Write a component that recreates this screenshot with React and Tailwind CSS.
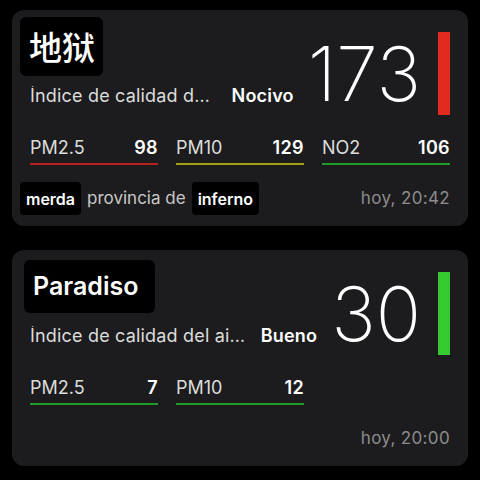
import React from "react";

const cards = [
    {
        title: "地狱",
        cjk: true,
        category: "Nocivo",
        subtitle: "Índice de calidad del aire",
        aqi: 173,
        bar: "bg-[#e12b1f]",
        pollutants: [
            { label: "PM2.5", value: 98, line: "border-[#b3221d]" },
            { label: "PM10", value: 129, line: "border-[#a39f12]" },
            { label: "NO2", value: 106, line: "border-[#1f9a26]" },
        ],
        tags: true,
        time: "hoy, 20:42",
    },
    {
        title: "Paradiso",
        cjk: false,
        category: "Bueno",
        subtitle: "Índice de calidad del aire",
        aqi: 30,
        bar: "bg-[#35cb30]",
        pollutants: [
            { label: "PM2.5", value: 7, line: "border-[#1f9a26]" },
            { label: "PM10", value: 12, line: "border-[#1f9a26]" },
        ],
        tags: false,
        time: "hoy, 20:00",
    },
];

function Tag({ children }) {
    return (
        <span className="bg-black rounded-[4px] h-[33px] px-[6px] flex items-center text-[16px] font-semibold text-white">
            {children}
        </span>
    );
}

function Card({ data, first }) {
    return (
        <div className={`w-[456px] h-[216px] ml-3 ${first ? "mt-[10px]" : "mt-6"} rounded-xl bg-[#1c1c1e] flex flex-col pt-[7px] px-[18px] pb-[11px]`}>

            {/* TOP */}
            <div className="flex items-start">

                <div className="flex-1 min-w-0 flex flex-col">
                    <div className={`h-[59px] flex items-center ${data.cjk ? "-ml-[10px]" : "-ml-[6px]"}`}>
                        {data.cjk ? (
                            <span className="bg-black rounded-md h-[59px] pl-[9px] pr-[8px] flex items-center text-[33px] font-medium text-white font-['Noto_Sans_CJK_SC',sans-serif]">
                                {data.title}
                            </span>
                        ) : (
                            <span className="bg-black rounded-md h-[53px] pl-[9px] pr-[17px] flex items-center text-[25px] font-semibold text-white">
                                {data.title}
                            </span>
                        )}
                    </div>
                    <div className="mt-[10px] flex items-baseline leading-[20px] text-[18px] tracking-[0.01em]">
                        <span className="truncate text-[#dcdcdc]">{data.subtitle}</span>
                        <span className="shrink-0 ml-[15px] font-semibold text-white">{data.category}</span>
                    </div>
                </div>

                <div className="ml-[14px] mt-[19px] text-[75px] font-extralight leading-none text-white">
                    {data.aqi}
                </div>

                <div className={`w-3 h-[83px] mt-[15px] ml-[17px] ${data.bar}`} />
            </div>

            {/* POLLUTANTS */}
            <div className="mt-[22px] grid grid-cols-3 gap-x-[18px]">
                {data.pollutants.map((p) => (
                    <div key={p.label} className={`flex justify-between items-baseline border-b-2 pb-[4px] leading-[22px] ${p.line}`}>
                        <span className="text-[18px] text-[#dcdcdc]">{p.label}</span>
                        <span className="text-[18px] font-semibold tracking-[0.02em] text-white">{p.value}</span>
                    </div>
                ))}
            </div>

            {/* BOTTOM */}
            <div className="mt-auto h-[33px] flex items-center justify-between">
                <div className="flex items-center gap-[6px] -ml-[10px]">
                    {data.tags && (
                        <>
                            <Tag>merda</Tag>
                            <span className="text-[17px] text-[#c8c8c8]">provincia de</span>
                            <Tag>inferno</Tag>
                        </>
                    )}
                </div>
                <span className="text-[17px] tracking-[0.02em] text-[#8c8c8c]">{data.time}</span>
            </div>
        </div>
    );
}

export default function App() {
    return (
        <div className="w-[480px] h-[480px] bg-black overflow-hidden font-['Inter','Noto_Sans_CJK_SC',sans-serif]">
            {cards.map((c, i) => (
                <Card key={c.title} data={c} first={i === 0} />
            ))}
        </div>
    );
}
